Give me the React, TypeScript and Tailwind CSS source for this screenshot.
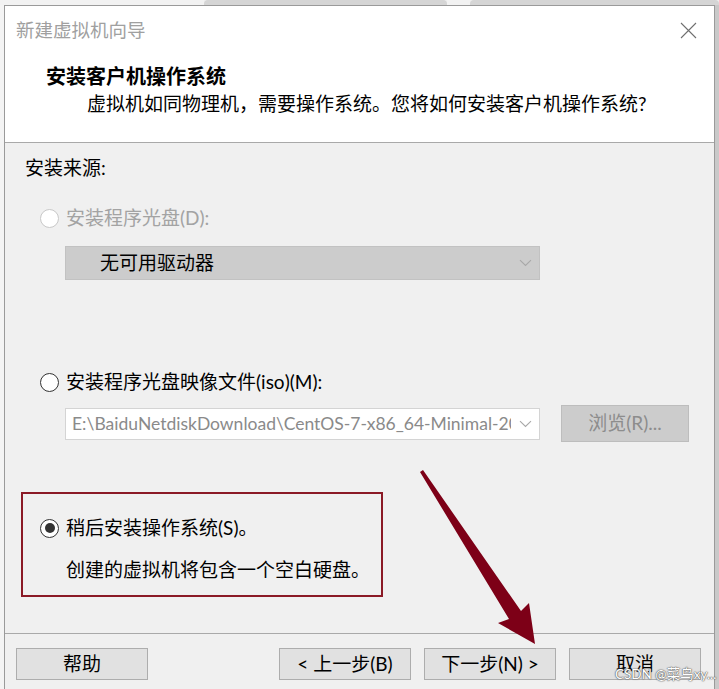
import React from 'react'

const font = { fontFamily: '"Segoe UI", Lato, "Noto Sans CJK SC", "Noto Sans", sans-serif' }

function Radio({ state }: { state: 'disabled' | 'off' | 'on' }) {
  const ring =
    state === 'disabled' ? 'border-[#c8c8c8]' : 'border-[#333333]'
  return (
    <span
      className={`flex h-[19px] w-[19px] shrink-0 items-center justify-center rounded-full border-[1.5px] bg-white ${ring}`}
    >
      {state === 'on' && <span className="h-[10px] w-[10px] rounded-full bg-[#333333]" />}
    </span>
  )
}

function Chevron({ color }: { color: string }) {
  return (
    <svg width="13" height="8" viewBox="0 0 13 8" fill="none">
      <path d="M1 1.2 L6.5 6.5 L12 1.2" stroke={color} strokeWidth="1.1" />
    </svg>
  )
}

function WizardButton({ label }: { label: string }) {
  return (
    <button className="flex h-[32px] w-[132px] items-center justify-center border border-[#adadad] bg-[#e1e1e1] text-[19px] text-black">
      {label}
    </button>
  )
}

export default function App() {
  return (
    <div
      className="relative h-[689px] w-[719px] overflow-hidden bg-[#eeeeee] text-black"
      style={font}
    >
      {/* strip of the desktop above the dialog */}
      <div className="flex h-[5px]">
        <div className="w-[204px] bg-[#f2f2f2]" />
        <div className="w-[243px] rounded-t-[4px] bg-[#d5d5d5]" />
        <div className="w-[23px] bg-[#f2f2f2]" />
        <div className="flex-1 rounded-t-[4px] bg-[#d5d5d5]" />
      </div>

      <div className="flex h-[684px]">
        <div className="w-[4px] bg-[#f4f4f4]" />
        <div className="flex w-[711px] flex-col border-x border-t border-[#9a9a9a]">
          {/* title bar */}
          <div className="flex h-[48px] items-center justify-between bg-white pl-[11px] pr-[17px]">
            <span className="text-[18.5px] leading-[24px] text-[#a0a0a0]">新建虚拟机向导</span>
            <svg width="17" height="17" viewBox="0 0 17 17" fill="none">
              <path d="M1 1 L16 16 M16 1 L1 16" stroke="#6f6f6f" strokeWidth="1.1" />
            </svg>
          </div>

          {/* header */}
          <div className="flex h-[88px] flex-col bg-white pt-[10px]">
            <div className="pl-[41px] text-[20px] font-bold leading-[24px]">安装客户机操作系统</div>
            <div className="mt-[4px] pl-[82px] text-[19px] leading-[24px]">
              虚拟机如同物理机，需要操作系统。您将如何安装客户机操作系统?
            </div>
          </div>

          <div className="h-px bg-[#a9a9a9]" />

          {/* body */}
          <div className="flex flex-1 flex-col bg-[#f0f0f0]">
            <div className="flex flex-col pl-[20px] pt-[13px]">
              <div className="text-[19px] leading-[24px]">安装来源:</div>

              <div className="mt-[26px] flex items-center gap-[7px] pl-[15px]">
                <Radio state="disabled" />
                <span className="text-[19px] leading-[24px] text-[#a3a3a3]">安装程序光盘(D):</span>
              </div>

              <div className="ml-[40px] mt-[16px] flex h-[34px] w-[475px] items-center justify-between border border-[#c2c2c2] bg-[#cccccc] pl-[34px] pr-[7px]">
                <span className="text-[19px] leading-[24px]">无可用驱动器</span>
                <Chevron color="#a8a8a8" />
              </div>

              <div className="mt-[90px] flex items-center gap-[7px] pl-[15px]">
                <Radio state="off" />
                <span className="text-[19px] leading-[24px]">安装程序光盘映像文件(iso)(M):</span>
              </div>

              <div className="mt-[11px] flex h-[37px] items-center pl-[40px]">
                <div className="flex h-[32px] w-[475px] items-center border border-[#d4d4d4] bg-white pl-[6px] pr-[7px]">
                  <span className="w-[439px] overflow-hidden whitespace-nowrap text-[17.5px] leading-[24px] text-[#8a8a8a]">
                    E:\BaiduNetdiskDownload\CentOS-7-x86_64-Minimal-2009.iso
                  </span>
                  <span className="ml-auto">
                    <Chevron color="#a8a8a8" />
                  </span>
                </div>
                <div className="ml-[21px] flex h-[37px] w-[128px] items-center justify-center border border-[#bdbdbd] bg-[#cccccc] text-[19px] text-[#8d8d8d]">
                  浏览(R)...
                </div>
              </div>
            </div>

            {/* the option chosen, framed in red */}
            <div className="ml-[16px] mt-[50px] flex h-[105px] w-[362px] flex-col border-2 border-[#8b1a26] pl-[17px] pt-[22px]">
              <div className="flex items-center gap-[7px]">
                <Radio state="on" />
                <span className="text-[19px] leading-[24px]">稍后安装操作系统(S)。</span>
              </div>
              <div className="mt-[18px] pl-[26px] text-[19px] leading-[24px]">创建的虚拟机将包含一个空白硬盘。</div>
            </div>

            <div className="mt-[36px] h-px bg-[#a9a9a9]" />

            <div className="flex items-center pl-[11px] pt-[14px]">
              <WizardButton label="帮助" />
              <div className="ml-[131px] flex gap-[13px]">
                <WizardButton label="< 上一步(B)" />
                <WizardButton label="下一步(N) >" />
                <WizardButton label="取消" />
              </div>
            </div>
          </div>
        </div>
        <div className="w-[4px] bg-[#c9c9c9]" />
      </div>

      {/* annotation arrow */}
      <svg
        className="pointer-events-none absolute left-0 top-0"
        width="719"
        height="689"
        viewBox="0 0 719 689"
      >
        <path
          d="M420 472 L423 470 L521 611 L529 603 L535 644 L498 623 L509 619 Z"
          fill="#7d0017"
        />
      </svg>

      {/* watermark */}
      <div
        className="absolute left-[615px] top-[665px] whitespace-nowrap text-[13.5px] leading-[18px] text-white"
        style={{ textShadow: '0 0 1px #555, 0 0 1px #555, 0 0 2px #888' }}
      >
        CSDN @菜鸟xy...
      </div>
    </div>
  )
}
